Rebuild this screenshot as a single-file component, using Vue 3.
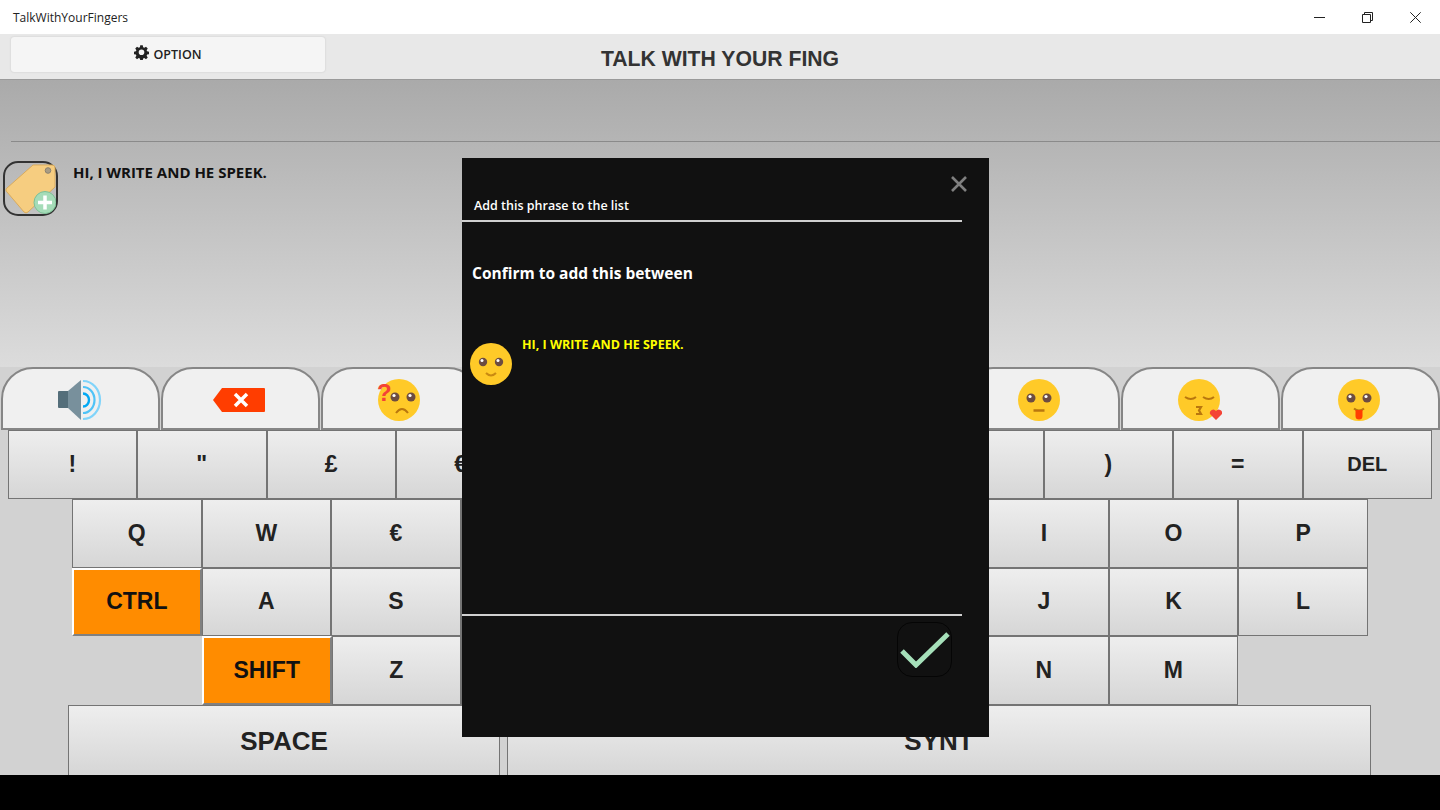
<template>
  <div class="app">
    <header class="titlebar">
      <span class="app-name">TalkWithYourFingers</span>
      <div class="win-controls">
        <svg width="11" height="11" viewBox="0 0 11 11"><path d="M0 5.5h11" stroke="#222" fill="none" /></svg>
        <svg width="11" height="11" viewBox="0 0 11 11"><path d="M.5 2.5h8v8h-8zM2.5 2.5v-2h8v8h-2" stroke="#222" fill="none" /></svg>
        <svg width="11" height="11" viewBox="0 0 11 11"><path d="M.3.3l10.4 10.4M10.7.3L.3 10.7" stroke="#222" fill="none" /></svg>
      </div>
    </header>

    <div class="toolbar">
      <div class="toolbar-left">
        <button class="option-btn">
          <svg class="gear" width="15" height="15" viewBox="0 0 24 24">
            <path d="M10 1h4l.6 3.2 1.9.8 2.7-1.8 2.8 2.8-1.8 2.7.8 1.9 3 .6v4l-3 .6-.8 1.9 1.8 2.7-2.8 2.8-2.7-1.8-1.9.8-.6 3h-4l-.6-3-1.9-.8-2.7 1.8-2.8-2.8 1.8-2.7-.8-1.9-3-.6v-4l3-.6.8-1.9-1.8-2.7 2.8-2.8 2.7 1.8 1.9-.8zM12 7.5a4.5 4.5 0 1 0 0 9 4.5 4.5 0 0 0 0-9z" fill="#222" fill-rule="evenodd" transform="translate(0 -.5)" />
          </svg>
          <span>OPTION</span>
        </button>
      </div>
      <h1 class="app-title">TALK WITH YOUR FING</h1>
    </div>

    <section class="text-panel">
      <div class="input-line"></div>
      <div class="phrase-row">
        <button class="tag-btn">
          <svg width="51" height="51" viewBox="0 0 51 51">
            <path d="M28 2h19a3 3 0 0 1 3 3v19L23 49a3 3 0 0 1-4 0L2 29a2.500 2.500 0 0 1 0-4z" fill="#f6cd80" stroke="#d9ab5c" />
            <circle cx="43" cy="7.500" r="2.800" fill="#a99c84" stroke="#8a8170" />
            <circle cx="40" cy="39.500" r="11" fill="#a5dcb8" stroke="#7dbf95" />
            <path d="M40 32.500v14M33 39.500h14" stroke="#fff" stroke-width="3.500" />
          </svg>
        </button>
        <p class="phrase">HI, I WRITE AND HE SPEEK.</p>
      </div>
    </section>

    <nav class="tabs">
      <div v-for="tab in tabs" :key="tab.id" class="tab">
        <svg v-if="tab.icon === 'speaker'" width="46" height="42" viewBox="0 0 46 42">
          <path d="M3 12h9v17H3a1 1 0 0 1-1-1V13a1 1 0 0 1 1-1z" fill="#546e7a" />
          <path d="M12 12L25 1v40L12 29z" fill="#78909c" />
          <path d="M27 2a17 19 0 0 1 0 38" fill="none" stroke="#81d4fa" stroke-width="2.200" />
          <path d="M27 8a11.500 13 0 0 1 0 26" fill="none" stroke="#4fc3f7" stroke-width="2.200" />
          <path d="M27 14.500a6 6.500 0 0 1 0 13" fill="none" stroke="#03a9f4" stroke-width="2.400" />
        </svg>
        <svg v-else-if="tab.icon === 'back'" width="54" height="26" viewBox="0 0 54 26">
          <path d="M10 1h42a1 1 0 0 1 1 1v22a1 1 0 0 1-1 1H10L1 13z" fill="#ff3d00" />
          <path d="M23 7l12 12M35 7L23 19" stroke="#fff" stroke-width="3.500" />
        </svg>
        <svg v-else width="46" height="44" viewBox="0 0 46 44">
          <circle cx="23" cy="22" r="21" fill="#ffca28" />
          <template v-if="tab.icon === 'sad'">
            <circle cx="19" cy="19" r="4.500" fill="#6d4c41" /><circle cx="35" cy="19" r="4.500" fill="#6d4c41" />
            <circle cx="18" cy="17.500" r="1.600" fill="#fff" /><circle cx="34" cy="17.500" r="1.600" fill="#fff" />
            <path d="M20 35q6-8 12 0" stroke="#b9770e" stroke-width="2" fill="none" />
            <text x="1" y="22.500" class="question">?</text>
          </template>
          <template v-else-if="tab.icon === 'kiss'">
            <path d="M9 19q6 4 11 0M27 19q6 4 11 0" stroke="#b9770e" stroke-width="2" fill="none" />
            <path d="M20 29h5l-2 3.500 2 3.500h-5" stroke="#b9770e" stroke-width="2.200" fill="none" />
            <path d="M40 42l-6-6a3.400 3.400 0 0 1 6-3 3.400 3.400 0 0 1 6 3z" fill="#f44336" />
          </template>
          <template v-else>
            <circle cx="15" cy="20" r="4.500" fill="#6d4c41" /><circle cx="31" cy="20" r="4.500" fill="#6d4c41" />
            <circle cx="14" cy="18.500" r="1.600" fill="#fff" /><circle cx="30" cy="18.500" r="1.600" fill="#fff" />
            <path v-if="tab.icon === 'neutral'" d="M17.500 32.500h11" stroke="#b9770e" stroke-width="2.500" />
            <path v-if="tab.icon === 'smile'" d="M17 30q6 6 12 0" stroke="#b9770e" stroke-width="2" fill="none" />
            <template v-if="tab.icon === 'tongue'">
              <path d="M18 30.500q5 4 10 0" stroke="#b9770e" stroke-width="2" fill="none" />
              <path d="M19.500 32h7v6a3.500 3.500 0 0 1-7 0z" fill="#ff3d00" />
            </template>
          </template>
        </svg>
      </div>
    </nav>

    <main class="keyboard">
      <div class="key-row row-num">
        <button v-for="k in numRow" :key="k" class="key" :class="{ small: k === 'DEL' }">{{ k }}</button>
      </div>
      <div class="key-row row-q">
        <button v-for="k in qRow" :key="k" class="key">{{ k }}</button>
      </div>
      <div class="key-row row-q">
        <button v-for="k in aRow" :key="k" class="key" :class="{ active: k === 'CTRL' }">{{ k }}</button>
      </div>
      <div class="key-row row-z">
        <button v-for="k in zRow" :key="k" class="key" :class="{ active: k === 'SHIFT' }">{{ k }}</button>
      </div>
      <div class="key-row row-space">
        <button class="key wide space">SPACE</button>
        <button class="key wide synt">SYNT</button>
      </div>
    </main>

    <footer class="taskbar"></footer>

    <div class="modal">
      <button class="modal-close">
        <svg width="16" height="16" viewBox="0 0 16 16"><path d="M1 1l14 14M15 1L1 15" stroke="#808080" stroke-width="2.600" /></svg>
      </button>
      <div class="modal-title">Add this phrase to the list</div>
      <div class="modal-body">
        <p class="modal-question">Confirm to add this between</p>
        <div class="modal-phrase">
          <svg width="42" height="42" viewBox="0 0 42 42">
            <circle cx="21" cy="21" r="21" fill="#ffca28" />
            <circle cx="13" cy="19" r="4.200" fill="#6d4c41" /><circle cx="29" cy="19" r="4.200" fill="#6d4c41" />
            <circle cx="12" cy="17.500" r="1.500" fill="#fff" /><circle cx="28" cy="17.500" r="1.500" fill="#fff" />
            <path d="M16 30q5 5 10 0" stroke="#c98a12" stroke-width="2" fill="none" />
          </svg>
          <span>HI, I WRITE AND HE SPEEK.</span>
        </div>
      </div>
      <div class="modal-footer">
        <button class="confirm-btn">
          <svg width="50" height="36" viewBox="0 0 50 36">
            <path d="M2 19l14 14L48 2" stroke="#a6e0ba" stroke-width="5" fill="none" />
          </svg>
        </button>
      </div>
    </div>
  </div>
</template>

<script setup>
const tabs = ['speaker', 'back', 'sad', 'smile', 'smile', 'smile', 'neutral', 'kiss', 'tongue'].map((icon, id) => ({ id, icon }))
const numRow = ['!', '"', '£', '€', '%', '&', '/', '(', ')', '=', 'DEL']
const qRow = ['Q', 'W', '€', 'R', 'T', 'Y', 'U', 'I', 'O', 'P']
const aRow = ['CTRL', 'A', 'S', 'D', 'F', 'G', 'H', 'J', 'K', 'L']
const zRow = ['SHIFT', 'Z', 'X', 'C', 'V', 'B', 'N', 'M']
</script>

<style>
html, body {
  margin: 0;
  overflow: hidden;
}
</style>

<style scoped>
.app {
  position: relative;
  width: 1440px;
  height: 810px;
  display: flex;
  flex-direction: column;
  overflow: hidden;
  background: #d2d2d2;
  font-family: "Liberation Sans", Arial, sans-serif;
}

.titlebar {
  height: 34px;
  flex: none;
  background: #fff;
  display: flex;
  align-items: center;
  justify-content: space-between;
  padding-left: 13px;
}

.app-name {
  font-family: "Open Sans", sans-serif;
  font-size: 12px;
  color: #222;
}

.win-controls {
  display: flex;
  gap: 37px;
  margin-right: 19px;
}

.toolbar {
  height: 46px;
  flex: none;
  box-sizing: border-box;
  display: grid;
  grid-template-columns: 1fr auto 1fr;
  background: #e8e8e8;
  border-bottom: 1px solid #9a9a9a;
}

.toolbar-left {
  padding: 3px 0 0 11px;
}

.option-btn {
  width: 314px;
  height: 35px;
  display: flex;
  align-items: center;
  justify-content: center;
  gap: 4px;
  padding: 0;
  border: none;
  border-radius: 3px;
  background: #f5f5f5;
  box-shadow: 0 0 2px #c4c4c4;
  font-family: "Open Sans", sans-serif;
  font-size: 12.500px;
  font-weight: 600;
  color: #222;
}

.gear {
  margin-top: -4px;
}

.app-title {
  margin: 10px 0 0;
  font-size: 21.200px;
  line-height: 30px;
  font-weight: 700;
  color: #333;
}

.text-panel {
  height: 287px;
  flex: none;
  box-sizing: border-box;
  padding-top: 61px;
  background: linear-gradient(#aaaaaa, #dcdcdc);
}

.input-line {
  height: 1px;
  margin-left: 11px;
  background: #8a8a8a;
}

.phrase-row {
  display: flex;
  align-items: flex-start;
  gap: 15px;
  margin: 19px 0 0 3px;
}

.tag-btn {
  width: 55px;
  height: 55px;
  display: flex;
  align-items: center;
  justify-content: center;
  padding: 0;
  border: 2px solid #333;
  border-radius: 15px;
  background: transparent;
}

.phrase {
  margin: 1px 0 0;
  font-family: "Open Sans", sans-serif;
  font-size: 15px;
  line-height: 20px;
  font-weight: 700;
  color: #111;
}

.tabs {
  height: 63px;
  flex: none;
  display: grid;
  grid-template-columns: repeat(9, 160px);
}

.tab {
  display: flex;
  align-items: center;
  justify-content: center;
  box-sizing: border-box;
  margin: 0 0.500px;
  padding: 3px 2px 0 0;
  border: 2px solid #868686;
  border-radius: 32px 32px 0 0;
  background: #f0f0f0;
}

.question {
  font-family: "Liberation Sans", sans-serif;
  font-size: 24px;
  font-weight: 700;
  fill: #f44336;
}

.keyboard {
  flex: 1;
  display: flex;
  flex-direction: column;
  min-height: 0;
}

.key-row {
  display: flex;
  height: 68.750px;
  flex: none;
}

.row-num {
  padding-left: 7.500px;
}

.row-q {
  padding-left: 72px;
}

.row-q .key {
  width: 129.600px;
}

.row-z {
  padding-left: 202px;
}

.row-space {
  padding-left: 68px;
  gap: 7px;
  height: 70px;
}

.key {
  width: 129.500px;
  flex: none;
  box-sizing: border-box;
  padding: 0;
  border: 1px solid #747474;
  background: linear-gradient(#eeeeee, #d6d6d6);
  font-family: "Liberation Sans", Arial, sans-serif;
  font-size: 23px;
  font-weight: 700;
  color: #222;
}

.key.small {
  font-size: 20px;
}

.key.active {
  background: #ff8c00;
  border-color: #fff #808080 #808080 #fff;
  border-width: 2px;
  color: #111;
}

.key.wide {
  height: 70px;
  padding-top: 2px;
  border-bottom: none;
  font-size: 26px;
}

.key.space {
  width: 432px;
}

.key.synt {
  width: 864px;
}

.taskbar {
  height: 35px;
  flex: none;
  background: #000;
}

/* dialog over the keyboard */
.modal {
  position: absolute;
  left: 462px;
  top: 158px;
  width: 527px;
  height: 579px;
  display: flex;
  flex-direction: column;
  background: #111;
  color: #fff;
  font-family: "Open Sans", sans-serif;
}

.modal-close {
  position: absolute;
  right: 22px;
  top: 18px;
  width: 16px;
  height: 16px;
  padding: 0;
  border: none;
  background: none;
}

.modal-title {
  box-sizing: border-box;
  width: 500px;
  height: 64px;
  padding: 39px 0 0 12px;
  border-bottom: 2px solid #d0d0d0;
  font-size: 12.500px;
  line-height: 18px;
  font-weight: 600;
}

.modal-body {
  height: 394px;
  box-sizing: border-box;
  width: 500px;
  padding-left: 8px;
  border-bottom: 2px solid #d0d0d0;
}

.modal-question {
  margin: 40px 0 0 2px;
  font-size: 15.500px;
  line-height: 22px;
  font-weight: 700;
}

.modal-phrase {
  display: flex;
  align-items: flex-start;
  gap: 10px;
  margin-top: 59px;
  font-size: 12.500px;
  line-height: 16px;
  font-weight: 700;
  color: #ffff00;
}

.modal-phrase span {
  margin-top: -6px;
}

.modal-footer {
  display: flex;
  justify-content: flex-end;
  padding: 6px 37px 0 0;
}

.confirm-btn {
  width: 55px;
  height: 55px;
  display: flex;
  align-items: center;
  justify-content: center;
  padding: 0;
  border: 1px solid #050505;
  border-radius: 15px;
  background: transparent;
}
</style>
